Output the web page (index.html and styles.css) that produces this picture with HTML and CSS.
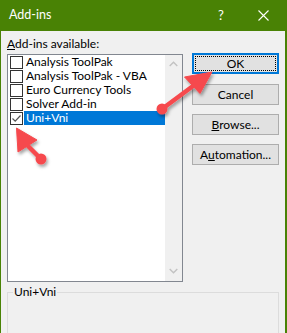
FILE: index.html
```html
<!DOCTYPE html>
<html>
<head>
<meta charset="utf-8">
<link rel="stylesheet" href="styles.css">
</head>
<body>
<div class="window">
  <div class="titlebar">
    <span class="title">Add-ins</span>
    <span class="help">?</span>
    <span class="close"><svg width="11" height="11" viewBox="0 0 11 11"><path d="M0.5 0.5 L10.5 10.5 M10.5 0.5 L0.5 10.5" stroke="#fff" stroke-width="1.1" fill="none"/></svg></span>
  </div>
  <div class="content">
    <div class="main">
      <div class="left">
        <div class="label"><u>A</u>dd-ins available:</div>
        <div class="listbox">
          <ul class="items">
            <li class="item"><span class="cb"></span><span class="txt">Analysis ToolPak</span></li>
            <li class="item"><span class="cb"></span><span class="txt">Analysis ToolPak - VBA</span></li>
            <li class="item"><span class="cb"></span><span class="txt">Euro Currency Tools</span></li>
            <li class="item"><span class="cb"></span><span class="txt">Solver Add-in</span></li>
            <li class="item"><span class="cb"><svg width="11" height="11" viewBox="0 0 11 11"><path d="M1.5 5.5 L4.2 8.2 L9.5 2.5" stroke="#555" stroke-width="1.2" fill="none"/></svg></span><span class="txt sel">Uni+Vni</span></li>
          </ul>
          <div class="scrollbar">
            <svg class="chev" width="9" height="6" viewBox="0 0 9 6"><path d="M0.7 5 L4.5 1.2 L8.3 5" stroke="#c2c2c2" stroke-width="1.4" fill="none"/></svg>
            <svg class="chev" width="9" height="6" viewBox="0 0 9 6"><path d="M0.7 1 L4.5 4.8 L8.3 1" stroke="#c2c2c2" stroke-width="1.4" fill="none"/></svg>
          </div>
        </div>
      </div>
      <div class="buttons">
        <div class="btn default"><span class="focus">OK</span></div>
        <div class="btn">Cancel</div>
        <div class="btn"><u>B</u>rowse...</div>
        <div class="btn">A<u>u</u>tomation...</div>
      </div>
    </div>
    <fieldset class="group"><legend>Uni+Vni</legend></fieldset>
  </div>
  <svg class="arrows" width="287" height="333" viewBox="0 0 287 333">
    <defs>
      <filter id="sh" x="-30%" y="-30%" width="160%" height="160%">
        <feDropShadow dx="1.5" dy="2.5" stdDeviation="1.6" flood-color="#000" flood-opacity="0.35"/>
      </filter>
    </defs>
    <g fill="#f64a4e" stroke="#f64a4e" filter="url(#sh)">
      <line x1="162" y1="109" x2="193" y2="86" stroke-width="4.5" stroke-linecap="round"/>
      <circle cx="162" cy="109" r="5.5" stroke="none"/>
      <polygon points="212,72 184.5,77 200,93.5" stroke-width="1" stroke-linejoin="round"/>
    </g>
    <g fill="#f64a4e" stroke="#f64a4e" filter="url(#sh)">
      <line x1="41" y1="159" x2="28" y2="146" stroke-width="4.5" stroke-linecap="round"/>
      <circle cx="41" cy="159" r="5.5" stroke="none"/>
      <polygon points="16.5,128 18,152 37,140" stroke-width="1" stroke-linejoin="round"/>
    </g>
  </svg>
</div>
</body>
</html>
```
FILE: styles.css
```css
html, body {
  margin: 0;
  padding: 0;
  background: #f0f0f0;
}
body {
  width: 287px;
  height: 333px;
  overflow: hidden;
  font-family: Lato, "Noto Sans", sans-serif;
  font-size: 12px;
  color: #000;
}
.window {
  position: relative;
  width: 287px;
  height: 333px;
  box-sizing: border-box;
  border-left: 1px solid #498205;
  border-right: 2px solid #498205;
  background: #f0f0f0;
  overflow: hidden;
}
.titlebar {
  height: 31px;
  background: #498205;
  color: #fff;
  display: flex;
  align-items: center;
  margin-left: -1px;
  margin-right: -2px;
}
.title {
  margin-left: 9px;
  font-size: 12.5px;
  flex: 1;
  line-height: 16px;
  margin-top: -1px;
}
.help {
  font-size: 13px;
  width: 40px;
  text-align: left;
  margin-top: -1px;
}
.close {
  width: 29px;
  display: flex;
  align-items: center;
}
.close svg { display: block; }
.content {
  padding: 5px 0 0 6px;
}
.main {
  display: flex;
  align-items: flex-start;
}
.left {
  width: 176px;
}
.label {
  line-height: 16px;
  height: 16px;
  margin-bottom: 2px;
}
.listbox {
  height: 228px;
  box-sizing: border-box;
  border: 1px solid #828790;
  background: #fff;
  display: flex;
}
.items {
  list-style: none;
  margin: 0;
  padding: 0 0 0 2px;
  flex: 1;
}
.item {
  height: 14px;
  display: flex;
  align-items: center;
  line-height: 14px;
}
.cb {
  width: 13px;
  height: 13px;
  box-sizing: border-box;
  border: 1px solid #333;
  background: #fff;
  margin-right: 1px;
  display: flex;
  align-items: center;
  justify-content: center;
  margin-top: 1px;
}
.cb svg { display: block; }
.txt {
  padding-left: 2px;
  flex: 1;
  white-space: nowrap;
}
.txt.sel {
  background: #0078d7;
  color: #fff;
}
.scrollbar {
  width: 17px;
  background: #f0f0f0;
  display: flex;
  flex-direction: column;
  justify-content: space-between;
  align-items: center;
  padding: 6px 0 7px;
}
.chev { display: block; }
.buttons {
  margin-left: 9px;
  margin-top: 17px;
  display: flex;
  flex-direction: column;
  gap: 9px;
}
.btn {
  width: 87px;
  height: 21px;
  box-sizing: border-box;
  border: 1px solid #adadad;
  background: #e1e1e1;
  display: flex;
  align-items: center;
  justify-content: center;
  line-height: 14px;
}
.btn.default {
  border: 2px solid #0078d7;
  margin-bottom: 1px;
  padding: 1px;
}
.focus {
  flex: 1;
  align-self: stretch;
  border: 1px dotted #000;
  display: flex;
  align-items: center;
  justify-content: center;
}
.group {
  margin: 3px 0 0 0;
  padding: 0;
  width: 272px;
  height: 70px;
  box-sizing: border-box;
  border: 1px solid #dcdcdc;
}
.group legend {
  margin-left: 5px;
  padding: 0 1px;
  line-height: 14px;
}
.arrows {
  position: absolute;
  left: -1px;
  top: 0;
}
```
